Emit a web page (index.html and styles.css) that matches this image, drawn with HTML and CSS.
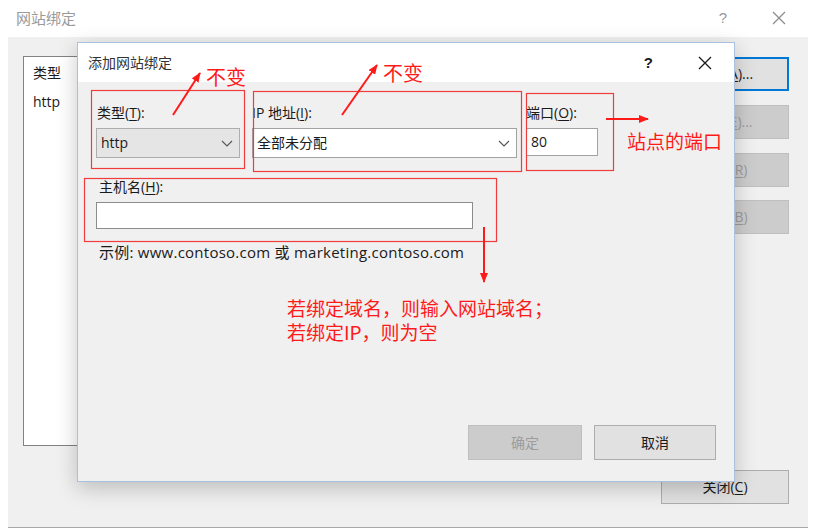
FILE: index.html
```html
<!DOCTYPE html>
<html lang="zh-CN">
<head>
<meta charset="utf-8">
<title>网站绑定</title>
<link rel="stylesheet" href="styles.css">
</head>
<body>
<div class="win">
  <div class="win-title">
    <span class="win-title-text">网站绑定</span>
    <span class="win-help">?</span>
    <svg class="win-close" width="14" height="14" viewBox="0 0 14 14"><path d="M1 1L13 13M13 1L1 13" stroke="#8a8a8a" stroke-width="1.2" fill="none"/></svg>
  </div>
  <div class="win-client">
    <div class="list">
      <div class="list-head">类型</div>
      <div class="list-row">http</div>
    </div>
    <div class="side">
      <button class="btn focus">添加(<u>A</u>)...</button>
      <button class="btn off">编辑(<u>E</u>)...</button>
      <button class="btn off">删除(<u>R</u>)</button>
      <button class="btn off">浏览(<u>B</u>)</button>
      <button class="btn close">关闭(<u>C</u>)</button>
    </div>
  </div>
</div>

<div class="dlg">
  <div class="dlg-title">
    <span class="dlg-title-text">添加网站绑定</span>
    <span class="dlg-help">?</span>
    <svg class="dlg-close" width="14" height="14" viewBox="0 0 14 14"><path d="M1 1L13 13M13 1L1 13" stroke="#1a1a1a" stroke-width="1.3" fill="none"/></svg>
  </div>
  <div class="dlg-body">
    <div class="fields">
      <div class="col col-type">
        <div class="lbl">类型(<u>T</u>):</div>
        <div class="combo combo-gray"><span>http</span>
          <svg width="12" height="7" viewBox="0 0 12 7"><path d="M1 1L6 6L11 1" stroke="#555" stroke-width="1.1" fill="none"/></svg>
        </div>
      </div>
      <div class="col col-ip">
        <div class="lbl">IP 地址(<u>I</u>):</div>
        <div class="combo combo-white"><span>全部未分配</span>
          <svg width="12" height="7" viewBox="0 0 12 7"><path d="M1 1L6 6L11 1" stroke="#555" stroke-width="1.1" fill="none"/></svg>
        </div>
      </div>
      <div class="col col-port">
        <div class="lbl">端口(<u>O</u>):</div>
        <div class="input input-port">80</div>
      </div>
    </div>
    <div class="lbl lbl-host">主机名(<u>H</u>):</div>
    <div class="input input-host"></div>
    <div class="example">示例: www.contoso.com 或 marketing.contoso.com</div>
    <div class="actions">
      <button class="btn off ok">确定</button>
      <button class="btn cancel">取消</button>
    </div>
  </div>
</div>

<svg class="marks" width="818" height="531" viewBox="0 0 818 531">
  <defs>
    <marker id="head" markerWidth="10" markerHeight="8" refX="9" refY="4" orient="auto" markerUnits="userSpaceOnUse">
      <path d="M0 0L10 4L0 8Z" fill="#ff1a1a"/>
    </marker>
  </defs>
  <g fill="none" stroke="#f03c3c" stroke-width="1.2">
    <rect x="91.5" y="90.5" width="153" height="78"/>
    <rect x="253.5" y="91.5" width="268" height="80"/>
    <rect x="526.5" y="93.5" width="87" height="77"/>
    <rect x="84.5" y="178.5" width="412" height="63"/>
  </g>
  <g stroke="#ff1a1a" stroke-width="2" fill="none" marker-end="url(#head)">
    <line x1="173" y1="115" x2="200" y2="73"/>
    <line x1="342" y1="115" x2="377" y2="65"/>
    <line x1="606" y1="119" x2="648" y2="119"/>
    <line x1="484" y1="227" x2="484" y2="282"/>
  </g>
</svg>

<div class="note note-1">不变</div>
<div class="note note-2">不变</div>
<div class="note note-3">站点的端口</div>
<div class="note note-4">若绑定域名，则输入网站域名；<br>若绑定IP，则为空</div>
</body>
</html>
```

FILE: styles.css
```css
* { box-sizing: border-box; }

html, body {
  margin: 0;
  padding: 0;
  background: #ffffff;
}

body {
  width: 818px;
  height: 531px;
  overflow: hidden;
  position: relative;
  font-family: "Open Sans", "Noto Sans CJK SC", sans-serif;
  font-size: 14px;
  color: #1a1a1a;
}

u { text-decoration: underline; text-underline-offset: 2px; text-decoration-thickness: 1px; }

/* ---------- background window ---------- */
.win-title {
  height: 37px;
  display: flex;
  align-items: center;
  padding-left: 16px;
  padding-bottom: 2px;
}

.win-title-text {
  font-size: 15px;
  color: #9a9a9a;
  line-height: 20px;
}

.win-help {
  margin-left: auto;
  color: #9a9a9a;
  font-size: 15px;
  line-height: 20px;
  font-family: "Liberation Sans", sans-serif;
}

.win-close {
  margin-left: 45px;
  margin-right: 32px;
}

.win-client {
  margin-left: 8px;
  width: 800px;
  height: 491px;
  background: #f0f0f0;
  border-bottom: 1px solid #a8a8a8;
  display: flex;
  padding: 19px 19px 23px 15px;
}

.list {
  width: 622px;
  height: 390px;
  background: #ffffff;
  border: 1px solid #828282;
  padding: 6px 0 0 9px;
}

.list-head, .list-row {
  line-height: 20px;
  font-size: 14px;
  color: #1a1a1a;
}

.list-row { margin-top: 9px; }

.side {
  margin-left: auto;
  width: 128px;
  display: flex;
  flex-direction: column;
  gap: 14px;
  padding-top: 1px;
}

.btn {
  font-family: "Open Sans", "Noto Sans CJK SC", sans-serif;
  font-size: 14px;
  line-height: 20px;
  color: #1a1a1a;
  background: #e1e1e1;
  border: 1px solid #adadad;
  border-radius: 0;
  padding: 0;
  height: 34px;
  width: 128px;
  text-align: center;
}

.btn.focus { border: 2px solid #0078d7; }

.btn.off {
  background: #cccccc;
  border-color: #bfbfbf;
  color: #9c9c9c;
}

.side .btn:nth-child(4) { margin-top: -1px; }

.btn.close { margin-top: auto; }

/* ---------- dialog ---------- */
.dlg {
  position: absolute;
  left: 77px;
  top: 42px;
  width: 658px;
  height: 440px;
  background: #f0f0f0;
  border: 1px solid #a7c1de;
  box-shadow: 0 6px 20px rgba(0, 0, 0, 0.22);
  display: flex;
  flex-direction: column;
}

.dlg-title {
  height: 39px;
  background: #ffffff;
  display: flex;
  align-items: center;
  padding-left: 10px;
}

.dlg-title-text {
  font-size: 14px;
  line-height: 20px;
  color: #333333;
}

.dlg-help {
  margin-left: auto;
  font-family: "Liberation Sans", sans-serif;
  font-weight: bold;
  font-size: 15px;
  color: #1a1a1a;
}

.dlg-close {
  margin-left: 45px;
  margin-right: 22px;
}

.dlg-body {
  flex: 1;
  display: flex;
  flex-direction: column;
  padding: 21px 18px 21px 18px;
}

.fields {
  display: flex;
  align-items: flex-start;
}

.col-type { width: 144px; }
.col-ip { width: 265px; margin-left: 12px; }
.col-port { width: 72px; margin-left: 9px; }

.lbl {
  line-height: 20px;
  height: 20px;
  font-size: 14px;
  color: #1a1a1a;
  margin-bottom: 5px;
  white-space: nowrap;
}

.col-type .lbl { padding-left: 1px; }

.combo {
  height: 30px;
  display: flex;
  align-items: center;
  justify-content: space-between;
  padding: 0 6px 0 4px;
  font-size: 14px;
  line-height: 20px;
}

.combo-gray {
  background: #e5e5e5;
  border: 1px solid #adadad;
}

.combo-white {
  background: #ffffff;
  border: 1px solid #a2a2a2;
}

.input {
  background: #ffffff;
  border: 1px solid #8c8c8c;
  font-size: 14px;
  line-height: 20px;
}

.input-port {
  height: 28px;
  padding: 3px 0 0 4px;
  border-color: #a2a2a2;
}

.lbl-host {
  margin-top: 19px;
  padding-left: 3px;
}

.input-host {
  width: 377px;
  height: 27px;
}

.example {
  margin-top: 13px;
  padding-left: 3px;
  line-height: 20px;
  font-size: 15px;
  letter-spacing: 0.25px;
  color: #1a1a1a;
  white-space: nowrap;
}

.actions {
  margin-top: auto;
  display: flex;
  justify-content: flex-end;
  gap: 12px;
}

.actions .btn { height: 35px; }
.actions .ok { width: 114px; }
.actions .cancel { width: 122px; }

/* ---------- annotations ---------- */
.marks {
  position: absolute;
  left: 0;
  top: 0;
  pointer-events: none;
}

.note {
  position: absolute;
  color: #ff1a1a;
  font-family: "Noto Sans CJK SC", sans-serif;
  font-size: 19px;
  line-height: 24px;
  white-space: nowrap;
}

.note-1 { left: 206px; top: 65px; font-size: 20px; }
.note-2 { left: 383px; top: 61px; font-size: 20px; }
.note-3 { left: 627px; top: 129px; }
.note-4 { left: 287px; top: 296px; }
```
